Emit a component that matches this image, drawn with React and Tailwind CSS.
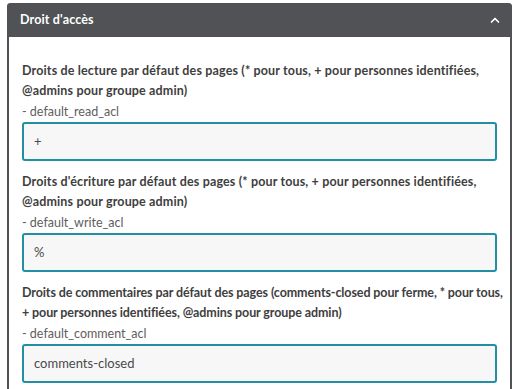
import React from "react";

const fields = [
  {
    lines: [
      "Droits de lecture par défaut des pages (* pour tous, + pour personnes identifiées,",
      "@admins pour groupe admin)",
    ],
    track: "tracking-[0.15px]",
    name: "- default_read_acl",
    value: "+",
  },
  {
    lines: [
      "Droits d'écriture par défaut des pages (* pour tous, + pour personnes identifiées,",
      "@admins pour groupe admin)",
    ],
    track: "tracking-[0.15px]",
    name: "- default_write_acl",
    value: "%",
  },
  {
    lines: [
      "Droits de commentaires par défaut des pages (comments-closed pour ferme, * pour tous,",
      "+ pour personnes identifiées, @admins pour groupe admin)",
    ],
    track: "tracking-[-0.1px]",
    name: "- default_comment_acl",
    value: "comments-closed",
  },
];

export default function App() {
  return (
    <div
      className="w-[519px] h-[389px] overflow-hidden bg-white pt-[3px] pl-[7px] pr-[7px]"
      style={{ fontFamily: "Lato, 'Open Sans', sans-serif" }}
    >
      <div className="rounded-t-[4px] border-x-2 border-[#505256] h-[420px]">
        <div className="-mx-[2px] h-[34px] bg-[#505256] rounded-t-[4px] flex items-center justify-between pl-[13px] pr-[11px]">
          <span className="text-white font-bold text-[12.5px] tracking-[0.15px]">Droit d'accès</span>
          <svg width="12" height="8" viewBox="0 0 12 8" fill="none">
            <path d="M2.5 6 L6 2.5 L9.5 6" stroke="white" strokeWidth="1.7" strokeLinecap="round" strokeLinejoin="round" />
          </svg>
        </div>
        <div className="pt-[24px] px-[13px]">
          {fields.map((f) => (
            <div key={f.name} className="mb-[11px]">
              <div className={`text-[12.5px] font-bold leading-[20px] text-[#3e3e3e] whitespace-nowrap ${f.track}`}>
                {f.lines[0]}
                <br />
                {f.lines[1]}
              </div>
              <div className="pt-[1px] text-[12.5px] leading-[19px] text-[#5e5e5e]">{f.name}</div>
              <div className="mt-[1px] h-[39px] rounded-[3px] border-2 border-[#2290a2] bg-[#f7f7f7] flex items-center px-[10px] text-[13px] text-[#4a4a4a]">
                {f.value}
              </div>
            </div>
          ))}
        </div>
      </div>
    </div>
  );
}
